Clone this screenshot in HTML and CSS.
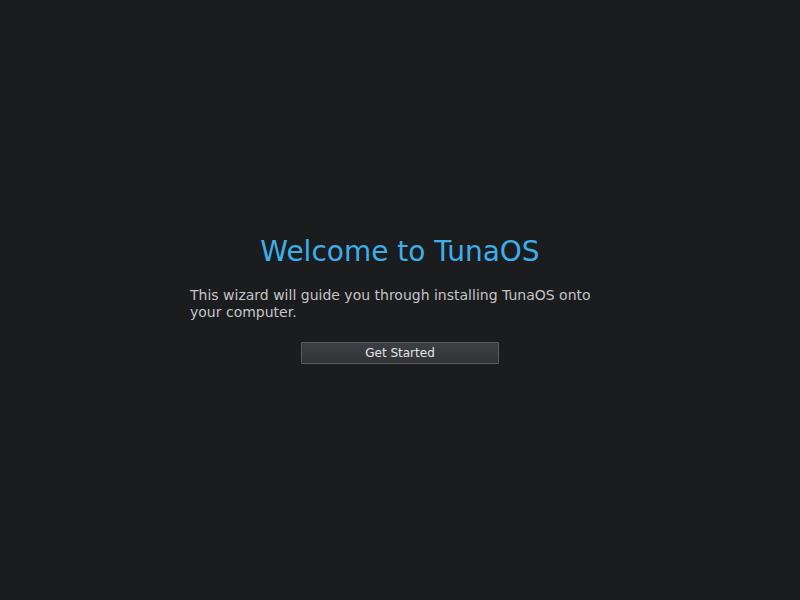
FILE: index.html
```html
<!DOCTYPE html>
<html lang="en">
<head>
    <meta charset="UTF-8">
    <meta name="viewport" content="width=device-width, initial-scale=1.0">
    <title>TunaOS Installer</title>
    <link rel="stylesheet" href="styles.css">
</head>
<body>
    <div class="welcome">
        <h1 class="welcome-title">Welcome to TunaOS</h1>
        <p class="welcome-text">This wizard will guide you through installing TunaOS onto your computer.</p>
        <button type="button" class="start-button">Get Started</button>
    </div>
</body>
</html>
```

FILE: styles.css
```css
*{
    margin: 0;
    padding: 0;
    box-sizing: border-box;
}
body{
    height: 100vh;
    background-color: #1b1c1e;
    font-family: "DejaVu Sans", sans-serif;
    display: flex;
    justify-content: center;
    align-items: center;
}

.welcome{
    width: 420px;
    margin-bottom: 2px;
    display: flex;
    flex-direction: column;
    align-items: center;
}
.welcome-title{
    color: #3daee9;
    font-size: 28px;
    font-weight: normal;
    line-height: 33px;
}
.welcome-text{
    align-self: stretch;
    margin-top: 19px;
    color: #c4c5c7;
    font-size: 14px;
    line-height: 17px;
}
.start-button{
    margin-top: 21px;
    width: 198px;
    height: 22px;
    font-family: inherit;
    font-size: 12px;
    color: #e4e4e4;
    background: linear-gradient(#3e3f43, #323336);
    border: 1px solid #5c5d61;
    border-radius: 1px;
    cursor: pointer;
}
```
